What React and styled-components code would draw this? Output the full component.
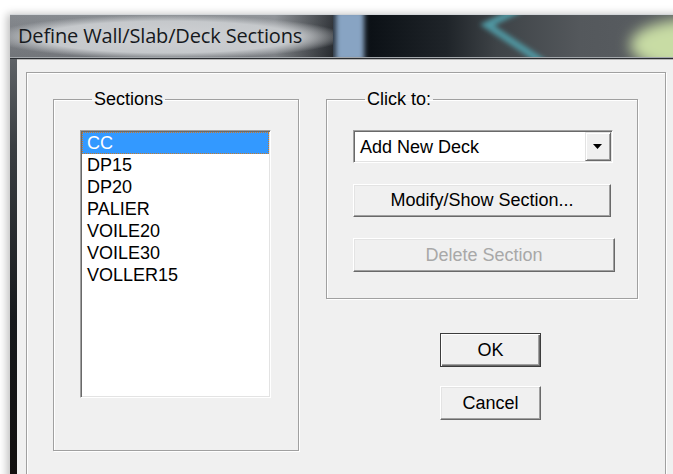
import React from "react";
import styled, { createGlobalStyle } from "styled-components";

const GlobalStyle = createGlobalStyle`
  html, body {
    margin: 0;
    padding: 0;
    background: #ffffff;
    overflow: hidden;
  }
  body {
    font-family: "Liberation Sans", Arial, sans-serif;
  }
`;

const Desktop = styled.div`
  width: 673px;
  height: 474px;
  padding: 14px 0 0 10px;
  box-sizing: border-box;
  overflow: hidden;
`;

const Window = styled.div`
  width: 700px;
  height: 480px;
  display: flex;
  flex-direction: column;
  box-shadow: -3px 0 8px rgba(0, 0, 0, 0.25);
`;

const TitleBar = styled.div`
  height: 44px;
  display: flex;
  border-top: 1px solid rgba(200, 204, 208, 0.8);
  border-bottom: 1px solid #a3a7ab;
  box-shadow: 0 1px 0 #2a2d31;
  box-sizing: border-box;
`;

const Caption = styled.div`
  width: 323px;
  flex-shrink: 0;
  display: flex;
  align-items: center;
  padding: 0 0 1px 8px;
  box-sizing: border-box;
  background:
    radial-gradient(178px 22px at 158px 22px, #cfd1d4 0%, #c5c8cb 72%, rgba(140, 144, 148, 0) 100%),
    linear-gradient(to bottom, rgba(255, 255, 255, 0.06) 0%, rgba(0, 0, 0, 0.1) 100%),
    linear-gradient(to right, #7e8287 0%, #8a8e93 82%, #2a2e33 100%);
`;

const CaptionText = styled.span`
  font-family: "Open Sans", "Noto Sans", sans-serif;
  font-size: 20px;
  color: #16191d;
  letter-spacing: -0.15px;
  white-space: nowrap;
`;

const Backdrop = styled.svg`
  flex: 1;
  height: 42px;
  display: block;
`;

const Frame = styled.div`
  flex: 1;
  display: flex;
  margin-top: 1px;
`;

const SideEdge = styled.div`
  width: 7px;
  flex-shrink: 0;
  background: linear-gradient(to bottom, #5e6266 0%, #3a3e42 20%, #16191c 60%, #120f0e 100%);
`;

const Client = styled.div`
  flex: 1;
  background: #f0f0f0;
  border-top: 1px solid #b8b8b8;
  padding: 12px 0 0 9px;
`;

const Panel = styled.div`
  width: 640px;
  height: 420px;
  box-sizing: border-box;
  border: 1px solid #a0a0a0;
  box-shadow: inset 1px 1px 0 #ffffff, 1px 1px 0 #ffffff;
  padding: 16px 0 0 26px;
  display: grid;
  grid-template-columns: 246px 312px;
  column-gap: 27px;
  align-items: start;
`;

const Group = styled.fieldset`
  margin: 0;
  min-width: 0;
  box-sizing: border-box;
  border: 1px solid #a0a0a0;
  box-shadow: inset 1px 1px 0 #ffffff, 1px 1px 0 #ffffff;
  height: ${(p) => p.$h}px;
  padding: ${(p) => p.$pad};
`;

const Legend = styled.legend`
  margin-left: 12px;
  padding: 0 2px;
  font-size: 18px;
  line-height: 20px;
  color: #000;
`;

const ListBox = styled.div`
  width: 191px;
  height: 268px;
  box-sizing: border-box;
  background: #ffffff;
  border: 1px solid;
  border-color: #a0a0a0 #ffffff #ffffff #a0a0a0;
  box-shadow: inset 1px 1px 0 #696969, inset -1px -1px 0 #e3e3e3;
  padding: 1px 1px 0 1px;
`;

const Item = styled.div`
  height: 22px;
  line-height: 23px;
  padding-left: 5px;
  font-size: 18px;
  color: ${(p) => (p.$selected ? "#ffffff" : "#000000")};
  background: ${(p) => (p.$selected ? "#3399ff" : "transparent")};
  outline: ${(p) => (p.$selected ? "1px dotted #c87a2a" : "none")};
  outline-offset: -1px;
  white-space: nowrap;
`;

const RightColumn = styled.div`
  display: flex;
  flex-direction: column;
`;

const Combo = styled.div`
  width: 260px;
  height: 33px;
  box-sizing: border-box;
  display: flex;
  align-items: stretch;
  background: #ffffff;
  border: 1px solid;
  border-color: #a0a0a0 #ffffff #ffffff #a0a0a0;
  box-shadow: inset 1px 1px 0 #696969, inset -1px -1px 0 #e3e3e3;
  padding: 1px;
`;

const ComboText = styled.div`
  flex: 1;
  padding-left: 5px;
  font-size: 18px;
  line-height: 30px;
  color: #000;
`;

const ArrowButton = styled.div`
  width: 26px;
  box-sizing: border-box;
  display: flex;
  align-items: center;
  justify-content: center;
  background: #f0f0f0;
  border: 1px solid;
  border-color: #e3e3e3 #696969 #696969 #e3e3e3;
  box-shadow: inset 1px 1px 0 #ffffff, inset -1px -1px 0 #a0a0a0;
`;

const Button = styled.button`
  display: block;
  width: ${(p) => p.$w}px;
  height: ${(p) => p.$h}px;
  margin: ${(p) => p.$m || "0"};
  padding: 0;
  box-sizing: border-box;
  background: #f0f0f0;
  font-family: "Liberation Sans", Arial, sans-serif;
  font-size: 18px;
  color: #000;
  border: 1px solid;
  border-color: #ffffff #696969 #696969 #ffffff;
  box-shadow: inset -1px -1px 0 #a0a0a0, inset 1px 1px 0 #e3e3e3;

  &:disabled {
    color: #a8a8a8;
  }
`;

const DefaultButton = styled(Button)`
  border: 1px solid #3c3c3c;
  box-shadow: inset 1px 1px 0 #ffffff, inset -1px -1px 0 #696969, inset -2px -2px 0 #a0a0a0;
`;

const sections = ["CC", "DP15", "DP20", "PALIER", "VOILE20", "VOILE30", "VOLLER15"];

export default function App() {
  return (
    <>
      <GlobalStyle />
      <Desktop>
        <Window>
          <TitleBar>
            <Caption>
              <CaptionText>Define Wall/Slab/Deck Sections</CaptionText>
            </Caption>
            <Backdrop viewBox="0 0 380 42" preserveAspectRatio="xMinYMin slice">
              <defs>
                <linearGradient id="glass" x1="0" x2="1" y1="0" y2="0">
                  <stop offset="0" stopColor="#2a3440" />
                  <stop offset="0.1" stopColor="#0c1116" />
                  <stop offset="0.3" stopColor="#1f2429" />
                  <stop offset="0.43" stopColor="#3e4347" />
                  <stop offset="0.65" stopColor="#54585c" />
                  <stop offset="1" stopColor="#5c6064" />
                </linearGradient>
                <filter id="soft" x="-50%" y="-50%" width="200%" height="200%">
                  <feGaussianBlur stdDeviation="2.5" />
                </filter>
                <filter id="haze" x="-50%" y="-50%" width="200%" height="200%">
                  <feGaussianBlur stdDeviation="7" />
                </filter>
              </defs>
              <rect x="0" y="0" width="380" height="42" fill="url(#glass)" />
              <rect x="3" y="-4" width="28" height="50" fill="#88a4c3" filter="url(#soft)" />
              <path d="M 187 -6 L 154 10 L 211 48" fill="none" stroke="#4f97a2" strokeWidth="7" filter="url(#soft)" />
              <ellipse cx="359" cy="30" rx="62" ry="26" fill="#c8dca4" filter="url(#haze)" />
            </Backdrop>
          </TitleBar>
          <Frame>
            <SideEdge />
            <Client>
              <Panel>
                <Group $h={362} $pad="21px 26px 0 26px">
                  <Legend>Sections</Legend>
                  <ListBox>
                    {sections.map((name, i) => (
                      <Item key={name} $selected={i === 0}>
                        {name}
                      </Item>
                    ))}
                  </ListBox>
                </Group>
                <RightColumn>
                  <Group $h={210} $pad="21px 26px 0 26px">
                    <Legend>Click to:</Legend>
                    <Combo>
                      <ComboText>Add New Deck</ComboText>
                      <ArrowButton>
                        <svg width="10" height="5" viewBox="0 0 10 5">
                          <polygon points="0,0 9,0 4.5,5" fill="#000" />
                        </svg>
                      </ArrowButton>
                    </Combo>
                    <Button $w={258} $h={33} $m="21px 0 0 0">
                      Modify/Show Section...
                    </Button>
                    <Button $w={262} $h={34} $m="21px 0 0 0" disabled>
                      Delete Section
                    </Button>
                  </Group>
                  <DefaultButton $w={101} $h={34} $m="34px 0 0 114px">
                    OK
                  </DefaultButton>
                  <Button $w={101} $h={34} $m="19px 0 0 114px">
                    Cancel
                  </Button>
                </RightColumn>
              </Panel>
            </Client>
          </Frame>
        </Window>
      </Desktop>
    </>
  );
}
